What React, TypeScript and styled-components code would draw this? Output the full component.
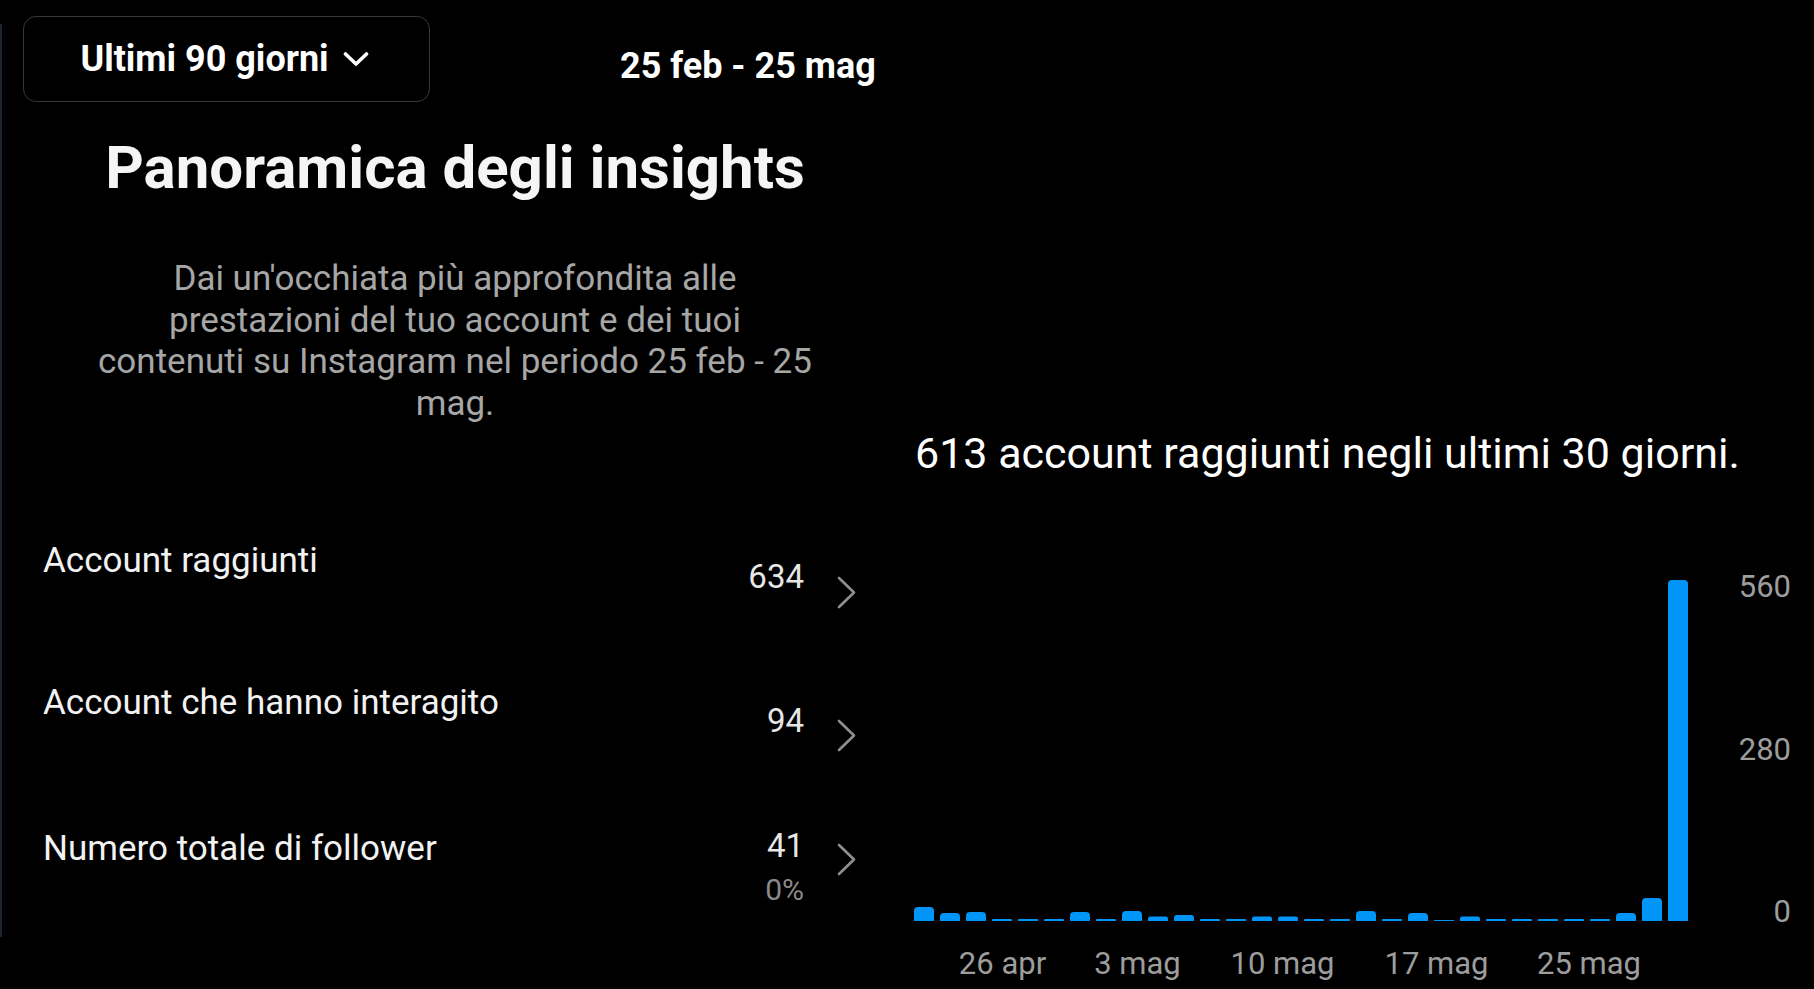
import React from "react";
import styled, { createGlobalStyle } from "styled-components";

const Global = createGlobalStyle`
  html, body {
    margin: 0;
    padding: 0;
    background: #000;
  }
  body {
    font-family: Roboto, "Noto Sans", "Liberation Sans", sans-serif;
    -webkit-font-smoothing: antialiased;
  }
  * { box-sizing: border-box; }
`;

const Page = styled.div`
  display: flex;
  width: 1814px;
  height: 989px;
  overflow: hidden;
  background: #000;
`;

const EdgeLine = styled.div`
  width: 2px;
  flex-shrink: 0;
  margin: 24px 0 52px;
  background: #1b2631;
`;

const LeftPanel = styled.section`
  width: 906px;
  flex-shrink: 0;
  display: flex;
  flex-direction: column;
  padding: 0 21px;
`;

const Header = styled.header`
  display: flex;
  align-items: flex-start;
  gap: 190px;
  padding-top: 16px;
`;

const DropButton = styled.button`
  width: 407px;
  height: 86px;
  display: flex;
  align-items: center;
  justify-content: center;
  gap: 14px;
  background: transparent;
  border: 1.5px solid #383838;
  border-radius: 13px;
  color: #fff;
  font-family: Roboto, sans-serif;
  font-weight: 700;
  font-size: 36px;
  line-height: 42px;
  padding: 0 4px 0 0;
  cursor: pointer;
`;

const DateLabel = styled.div`
  margin-top: 29px;
  color: #fff;
  font-weight: 700;
  font-size: 36px;
  line-height: 42px;
`;

const Title = styled.h1`
  margin: 31px 0 0;
  text-align: center;
  color: #f5f5f5;
  font-weight: 700;
  font-size: 60px;
  line-height: 70px;
`;

const Description = styled.p`
  margin: 55px 0 0;
  text-align: center;
  color: #a6a6a6;
  font-size: 35px;
  line-height: 41.6px;
`;

const Rows = styled.div`
  margin-top: 117px;
  display: flex;
  flex-direction: column;
`;

const Row = styled.div<{ $h?: number }>`
  display: grid;
  grid-template-columns: 1fr auto 19px;
  column-gap: 33px;
  align-items: start;
  height: ${(p) => (p.$h ? `${p.$h}px` : "auto")};
  padding: 0 31px 0 20px;
`;

const RowLabel = styled.div`
  color: #f2f2f2;
  font-size: 35px;
  line-height: 40px;
`;

const ValueBox = styled.div<{ $offset: number }>`
  margin-top: ${(p) => p.$offset}px;
  display: flex;
  flex-direction: column;
  align-items: flex-end;
`;

const Value = styled.div`
  color: #e6e6e6;
  font-size: 33px;
  line-height: 38px;
`;

const SubValue = styled.div`
  color: #8a8a8a;
  font-size: 30px;
  line-height: 50px;
`;

const ChevronWrap = styled.div<{ $offset: number }>`
  margin-top: ${(p) => p.$offset}px;
  width: 19px;
  height: 33px;
  display: flex;
`;

const RightPanel = styled.section`
  flex: 1;
  display: flex;
  flex-direction: column;
  padding-top: 428px;
`;

const Headline = styled.div`
  padding-left: 7px;
  color: #fff;
  font-size: 43px;
  line-height: 50px;
  white-space: nowrap;
`;

const Chart = styled.svg`
  display: block;
  margin-top: 82px;
  width: 906px;
  height: 429px;
  font-family: Roboto, sans-serif;
`;

const RowChevron = () => (
  <svg width="19" height="33" viewBox="0 0 19 33">
    <polyline
      points="2,2 17,16.5 2,31"
      fill="none"
      stroke="#8f8f8f"
      strokeWidth="2.6"
      strokeLinecap="round"
      strokeLinejoin="round"
    />
  </svg>
);

const DownChevron = () => (
  <svg width="26" height="16" viewBox="0 0 26 16">
    <polyline
      points="2.5,3 13,13 23.5,3"
      fill="none"
      stroke="#fff"
      strokeWidth="3.6"
      strokeLinecap="round"
      strokeLinejoin="round"
    />
  </svg>
);

const bars = [
  14, 8, 9, 2, 2, 2, 9, 2, 10, 4.5, 6, 2, 2, 4.5, 4.5, 2, 2, 10, 2, 8, 1, 4.5,
  2, 2, 2, 2, 2, 8, 23, 341,
];

const BASE = 361;
const BAR_W = 20;
const STEP = 26;
const X0 = 6;

function barPath(x: number, h: number) {
  const y0 = BASE - h;
  const r = Math.min(4, h / 2, BAR_W / 2);
  return `M${x},${BASE} V${y0 + r} Q${x},${y0} ${x + r},${y0} H${x + BAR_W - r} Q${x + BAR_W},${y0} ${x + BAR_W},${y0 + r} V${BASE} Z`;
}

const yTicks = [
  { label: "560", y: 37 },
  { label: "280", y: 200 },
  { label: "0", y: 362 },
];

const xTicks = [
  { label: "26 apr", x: 94.5 },
  { label: "3 mag", x: 229.5 },
  { label: "10 mag", x: 374.5 },
  { label: "17 mag", x: 528.5 },
  { label: "25 mag", x: 681 },
];

const rows = [
  { label: "Account raggiunti", value: "634", h: 142, vo: 17, co: 35 },
  { label: "Account che hanno interagito", value: "94", h: 146, vo: 19, co: 36 },
  { label: "Numero totale di follower", value: "41", sub: "0%", vo: -2, co: 14 },
];

export default function App() {
  return (
    <>
      <Global />
      <Page>
        <EdgeLine />
        <LeftPanel>
          <Header>
            <DropButton>
              Ultimi 90 giorni
              <DownChevron />
            </DropButton>
            <DateLabel>25 feb - 25 mag</DateLabel>
          </Header>
          <Title>Panoramica degli insights</Title>
          <Description>
            Dai un'occhiata più approfondita alle
            <br />
            prestazioni del tuo account e dei tuoi
            <br />
            contenuti su Instagram nel periodo 25 feb - 25
            <br />
            mag.
          </Description>
          <Rows>
            {rows.map((r) => (
              <Row key={r.label} $h={r.h}>
                <RowLabel>{r.label}</RowLabel>
                <ValueBox $offset={r.vo}>
                  <Value>{r.value}</Value>
                  {r.sub && <SubValue>{r.sub}</SubValue>}
                </ValueBox>
                <ChevronWrap $offset={r.co}>
                  <RowChevron />
                </ChevronWrap>
              </Row>
            ))}
          </Rows>
        </LeftPanel>
        <RightPanel>
          <Headline>613 account raggiunti negli ultimi 30 giorni.</Headline>
          <Chart viewBox="0 0 906 429">
            {bars.map((h, i) => (
              <path key={i} d={barPath(X0 + i * STEP, h)} fill="#0095f6" />
            ))}
            {yTicks.map((t) => (
              <text
                key={t.label}
                x={883}
                y={t.y}
                textAnchor="end"
                fill="#9d9d9d"
                fontSize="31"
              >
                {t.label}
              </text>
            ))}
            {xTicks.map((t) => (
              <text
                key={t.label}
                x={t.x}
                y={414}
                textAnchor="middle"
                fill="#9d9d9d"
                fontSize="31"
              >
                {t.label}
              </text>
            ))}
          </Chart>
        </RightPanel>
      </Page>
    </>
  );
}
